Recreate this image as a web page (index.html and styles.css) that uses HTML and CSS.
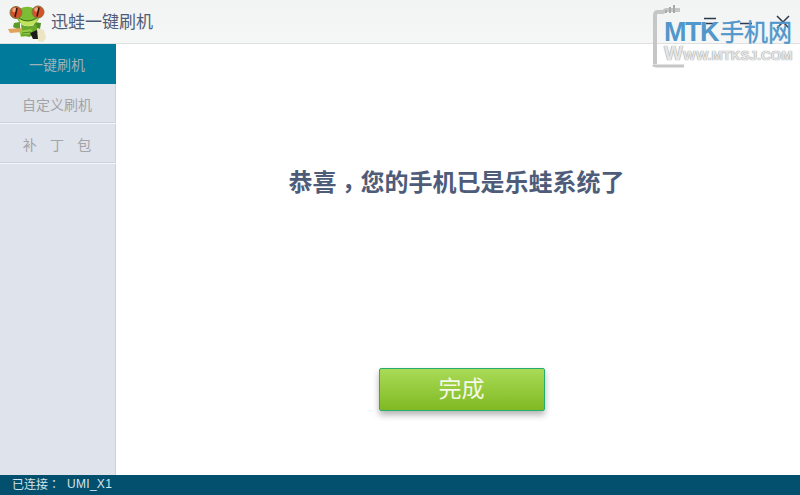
FILE: index.html
```html
<!DOCTYPE html>
<html lang="zh-CN">
<head>
  <meta charset="UTF-8"/>
  <title>迅蛙一键刷机</title>
  <link rel="stylesheet" href="styles.css">
</head>
<body>
  <div class="app">
    <header class="topbar">
      <svg class="logo" width="48" height="43" viewBox="0 0 48 43">
        <path d="M20 22 L14 23 L13 27 L20 30Z" fill="#5a9a26"/>
        <path d="M34 22 L41 23 L40 29 L34 30Z" fill="#4f8a22"/>
        <path d="M21 24 C25 27 31 27 36 24 L38 33 L29 37 L22 35Z" fill="#6aa82c"/>
        <path d="M20 9 C24 6 31 6 34 9 C40 13 41 20 35 23 L22 24 C16 21 15 14 20 9Z" fill="#7dbd33"/>
        <path d="M19 18 C24 22 32 22 38 17 C37 24 32 26 28 26 C23 26 20 24 19 18Z" fill="#bfe35c"/>
        <path d="M19 18 C24 22 32 22 38 17" fill="none" stroke="#2f6419" stroke-width="1"/>
        <circle cx="16" cy="12.500" r="6" fill="#d3522a" stroke="#7d7a42" stroke-width="1"/>
        <circle cx="38" cy="12" r="6" fill="#d3522a" stroke="#7d7a42" stroke-width="1"/>
        <circle cx="14.500" cy="10" r="2.200" fill="#f0a682"/>
        <circle cx="36.500" cy="9.500" r="2.200" fill="#f0a682"/>
        <path d="M17 8 L15 17" stroke="#34180e" stroke-width="1.500"/>
        <path d="M39 7.500 L37 16.500" stroke="#34180e" stroke-width="1.500"/>
        <path d="M8 29 L22 28 L22 32 L10 33Z" fill="#dfa35c"/>
        <path d="M19 31 L31 29 L33 33 L28 36 L21 37Z" fill="#93cb42"/>
        <path d="M22 33 L31 32 M21 35 L30 35" stroke="#4f8a22" stroke-width="1"/>
        <path d="M37 28 L44 30 L46 38 L43 42 L38 41Z" fill="#ece5c4"/>
        <path d="M30 33 L37 30 L38 39 L33 39Z" fill="#1c1c18"/>
      </svg>
      <span class="app-name">迅蛙一键刷机</span>
      <div class="win-btns">
        <svg width="14" height="10" viewBox="0 0 14 10"><path d="M1 1.500H13M3 6.500H11" stroke="#2f3a4c" stroke-width="1.500"/></svg>
        <svg width="14" height="10" viewBox="0 0 14 10"><path d="M1 6.500H13" stroke="#2f3a4c" stroke-width="1.500"/></svg>
        <svg width="16" height="16" viewBox="0 0 16 16"><path d="M2 2L14 14M14 2L2 14" stroke="#2f3a4c" stroke-width="1.500"/></svg>
      </div>
    </header>

    <div class="middle">
      <nav class="sidebar">
        <a class="nav-item active">一键刷机</a>
        <a class="nav-item">自定义刷机</a>
        <a class="nav-item spaced">补&nbsp;&nbsp;&nbsp;丁&nbsp;&nbsp;&nbsp;包</a>
      </nav>
      <main class="content">
        <h1 class="message">恭喜<span class="comma" lang="zh-TW">，</span>您的手机已是乐蛙系统了</h1>
        <button class="done-btn">完成</button>
      </main>
    </div>

    <footer class="statusbar">
      <span class="status-label">已连接<span class="colon" lang="zh-TW">：</span></span>
      <span class="device">UMI_X1</span>
    </footer>

    <!-- watermark on top of the screenshot -->
    <div class="watermark">
      <svg class="wm-phone" width="60" height="68" viewBox="0 0 60 68">
        <path d="M5 64V15Q5 12 8 12H13L16 10H30" fill="none" stroke="#c6c6c6" stroke-width="4"/>
        <path d="M3 65Q4 66 7 66H34" fill="none" stroke="#c6c6c6" stroke-width="3"/>
        <path d="M16 13V10M20 13V7M24 13V5" stroke="#a9a9a9" stroke-width="2" fill="none"/>
      </svg>
      <div class="wm-title"><span class="wm-latin">MTK</span>手机网</div>
      <div class="wm-url"><span class="wm-w">W</span>WW.MTKSJ.COM</div>
    </div>
  </div>
</body>
</html>
```

FILE: styles.css
```css
html,body{margin:0;padding:0}
body{width:800px;height:495px;overflow:hidden;background:#fff;
     font-family:"Liberation Sans","Noto Sans CJK SC",sans-serif}
.app{position:relative;width:800px;height:495px;display:flex;flex-direction:column}

.topbar{height:43px;flex:none;display:flex;align-items:center;
        background:linear-gradient(#f2f3f3,#f5f6f6);border-bottom:1px solid #e0e0e0}
.logo{flex:none}
.app-name{font-size:17px;color:#4d5c78;margin-left:3px;padding-bottom:3px}
.win-btns{margin-left:auto;display:flex;align-items:center;gap:22px;padding-right:9px}

.middle{flex:1;display:flex;min-height:0}
.sidebar{width:116px;flex:none;background:#dfe3ec;box-shadow:inset -1px 0 #ccd0da}
.nav-item{display:block;height:38px;line-height:42px;padding-right:2px;text-align:center;font-size:14px;
          color:#a3a4a7;border-bottom:1px solid #cfd3dc;box-shadow:0 1px 0 #f2f4f7;margin-bottom:1px}
.nav-item.active{height:40px;line-height:42px;background:#007a9b;color:#9fb1b8;border:0;box-shadow:none;margin:0}
.spaced{word-spacing:.5px}

.content{flex:1;display:flex;flex-direction:column;align-items:center;background:#fff}
.message{margin:123px 0 0;padding-right:3px;font-size:24px;line-height:32px;font-weight:bold;color:#4e5c7a;white-space:nowrap}
.comma{font-family:"Noto Sans CJK TC",sans-serif;line-height:0;vertical-align:-6px}
.done-btn{margin-top:169px;margin-left:7px;width:166px;height:43px;padding:0 0 5px;font:inherit;font-size:23px;color:#f4f8e6;
          background:linear-gradient(#a9db57,#80b923);border:1px solid #25ad70;border-radius:2px;
          box-shadow:0 4px 6px rgba(70,70,70,.4)}

.statusbar{height:17px;padding-bottom:3px;flex:none;display:flex;align-items:center;padding-left:12px;
           background:#03506e;color:#d5e4ea;font-size:12px}
.status-label{width:55px}
.colon{font-family:"Noto Sans CJK TC",sans-serif}
.device{letter-spacing:.3px}

.watermark{position:absolute;left:650px;top:0;width:150px;height:70px;display:flex;flex-direction:column;
           padding:21px 0 0 14px;box-sizing:border-box}
.wm-phone{position:absolute;left:0;top:0}
.wm-title{position:relative;height:22px;font-size:24px;line-height:22px;color:#5197cb;white-space:nowrap;
          -webkit-text-stroke:.4px #5197cb}
.wm-latin{font-size:27px;font-weight:bold;letter-spacing:-1.500px;margin-right:2px;-webkit-text-stroke:0}
.wm-url{position:relative;height:20px;font-size:13.500px;line-height:20px;font-weight:bold;color:#e6e6e6;white-space:nowrap;
        text-shadow:0 0 1px #999,0 0 1px #999}
.wm-w{font-size:20px}
```
